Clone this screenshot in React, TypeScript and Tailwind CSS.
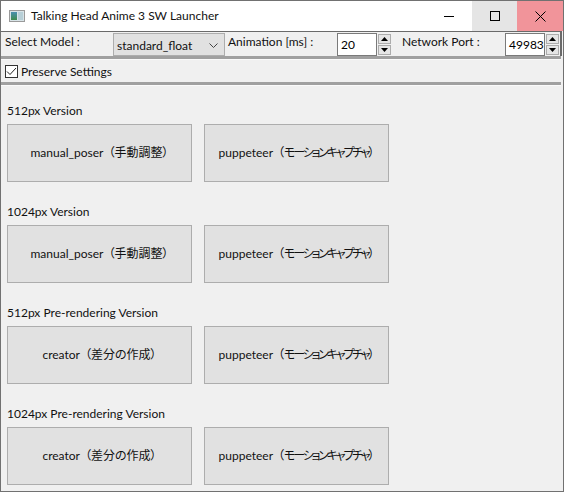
import React from 'react'

const font = { fontFamily: 'Lato, "Noto Sans CJK JP", sans-serif' }

function SpinBox({ value, width }: { value: string; width: string }) {
  return (
    <div className="flex h-[23px] items-stretch">
      <div className={`${width} flex items-center border border-[#7a7a7a] bg-white pl-[3px] pt-[1px] text-[12px] text-black`}>
        {value}
      </div>
      <div className="flex w-[15px] flex-col justify-between py-[1px] pl-[1px]">
        <div className="flex h-[10px] w-[13px] items-center justify-center border border-[#acacac] bg-[#e5e5e5]">
          <svg width="7" height="4" viewBox="0 0 7 4"><path d="M0 4 L3.5 0 L7 4 Z" fill="#000" /></svg>
        </div>
        <div className="flex h-[10px] w-[13px] items-center justify-center border border-[#acacac] bg-[#e5e5e5]">
          <svg width="7" height="4" viewBox="0 0 7 4"><path d="M0 0 L3.5 4 L7 0 Z" fill="#000" /></svg>
        </div>
      </div>
    </div>
  )
}

function LaunchButton({ name, jp, tight }: { name: string; jp: string; tight?: boolean }) {
  return (
    <button
      type="button"
      className="flex h-[58px] w-[185px] items-center justify-center whitespace-nowrap border border-[#adadad] bg-[#e1e1e1] text-[12px] text-[#111]"
    >
      {name}
      <span className="ml-[5px] [font-feature-settings:'palt']">
        （<span className={tight ? 'tracking-[-2.2px]' : ''}>{jp}</span>）
      </span>
    </button>
  )
}

const sections = [
  { title: '512px Version', name: 'manual_poser', jp: '手動調整' },
  { title: '1024px Version', name: 'manual_poser', jp: '手動調整' },
  { title: '512px Pre-rendering Version', name: 'creator', jp: '差分の作成' },
  { title: '1024px Pre-rendering Version', name: 'creator', jp: '差分の作成' },
]

export default function App() {
  return (
    <div className="flex h-[492px] w-[564px] flex-col border border-[#717171] bg-[#f0f0f0] text-[#111]" style={font}>
      {/* title bar */}
      <div className="flex h-[30px] items-stretch bg-white">
        <div className="flex items-center pl-[8px]">
          <div className="flex h-[12px] w-[16px] border border-[#9a9a9a] bg-[#d8e4e8]">
            <div className="m-[1px] w-[6px] bg-gradient-to-b from-[#4a8fb0] to-[#3f8a4a]" />
            <div className="my-[1px] w-[5px] bg-[#b8d0d8]" />
          </div>
        </div>
        <div className="flex items-center pl-[6px] text-[12px]">Talking Head Anime 3 SW Launcher</div>
        <div className="ml-auto flex">
          <div className="flex w-[46px] items-center justify-center">
            <svg width="10" height="10" viewBox="0 0 10 10"><path d="M0 5.5 H10" stroke="#000" strokeWidth="1" /></svg>
          </div>
          <div className="flex w-[45px] items-center justify-center bg-[#e5e5e5]">
            <svg width="10" height="10" viewBox="0 0 10 10"><rect x="0.5" y="0.5" width="9" height="9" fill="none" stroke="#000" strokeWidth="1" /></svg>
          </div>
          <div className="flex w-[46px] items-center justify-center bg-[#f1949a]">
            <svg width="11" height="11" viewBox="0 0 11 11"><path d="M0.5 0.5 L10.5 10.5 M10.5 0.5 L0.5 10.5" stroke="#000" strokeWidth="1" /></svg>
          </div>
        </div>
      </div>

      {/* settings toolbar */}
      <div className="mr-[1px] flex h-[25px] items-stretch border-t border-r-2 border-[#6a6a6a] pt-[1px]">
        <div className="w-[112px] pl-[4px] pt-[1px] text-[12px] leading-[16px]">Select Model :</div>
        <div className="flex h-[23px] w-[112px] items-center justify-between border border-[#adadad] bg-[#e1e1e1] pl-[3px] pr-[6px] pt-[2px] text-[12px]">
          <span>standard_float</span>
          <svg width="9" height="6" viewBox="0 0 9 6"><path d="M0.5 0.5 L4.5 4.5 L8.5 0.5" fill="none" stroke="#444" strokeWidth="1" /></svg>
        </div>
        <div className="w-[112px] pl-[3px] pt-[1px] text-[12px] leading-[16px]">Animation [ms] :</div>
        <SpinBox value="20" width="w-[40px]" />
        <div className="w-[113px] pl-[10px] pt-[1px] text-[12px] leading-[16px]">Network Port :</div>
        <SpinBox value="49983" width="w-[40px]" />
      </div>
      <div className="mr-[2px] h-[3px] bg-[#a0a0a0]" />
      <div className="mr-[2px] h-[1px] bg-[#fafafa]" />

      {/* preserve settings */}
      <div className="flex h-[22px] items-center gap-[3px] pl-[4px] pt-[1px]">
        <div className="flex h-[13px] w-[13px] items-center justify-center border border-[#333] bg-white">
          <svg width="11" height="9" viewBox="0 0 11 9"><path d="M1 4.5 L4 7.5 L10 1" fill="none" stroke="#222" strokeWidth="1" /></svg>
        </div>
        <span className="text-[12px]">Preserve Settings</span>
      </div>
      <div className="mr-[2px] h-[3px] bg-[#a0a0a0]" />
      <div className="mr-[2px] h-[1px] bg-[#fafafa]" />

      {/* launch sections */}
      <div className="flex flex-col gap-[21px] pl-[6px] pt-[16px]">
        {sections.map((s) => (
          <div key={s.title} className="flex flex-col gap-[5px]">
            <div className="h-[17px] pt-[1px] text-[12px] leading-[16px]">{s.title}</div>
            <div className="flex gap-[12px]">
              <LaunchButton name={s.name} jp={s.jp} />
              <LaunchButton name="puppeteer" jp="モーションキャプチャ" tight />
            </div>
          </div>
        ))}
      </div>
    </div>
  )
}
